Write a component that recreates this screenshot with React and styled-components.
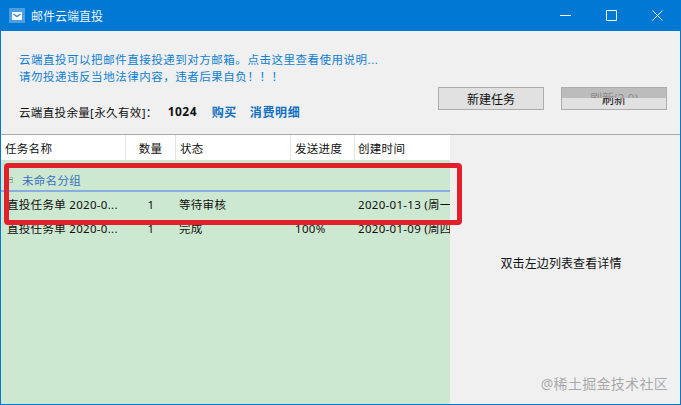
import styled, { createGlobalStyle } from "styled-components"

const Global = createGlobalStyle`
html, body { margin: 0; padding: 0; background: #f0f0f0; overflow: hidden; }
* { box-sizing: border-box; }
`

const fonts = `"Noto Sans", "Noto Sans CJK SC", sans-serif`

const Window = styled.div`
position: relative;
width: 681px;
height: 405px;
display: flex;
flex-direction: column;
background: #f0f0f0;
border: 1px solid #0078d4;
border-top: none;
font-family: ${fonts};
font-size: 12px;
color: #111;
overflow: hidden;
`

const TitleBar = styled.div`
height: 31px;
flex: none;
margin: 0 -1px;
background: #0078d4;
display: flex;
align-items: center;
padding-left: 9px;
color: #eaf4fc;
`

const AppIcon = styled.div`
width: 16px;
height: 15px;
background: #4a9fe4;
display: flex;
align-items: center;
justify-content: center;
margin-right: 6px;
`

const Title = styled.div`
font-size: 12px;
flex: 1;
`

const WinButton = styled.div`
width: 46px;
height: 31px;
display: flex;
align-items: center;
justify-content: center;
margin-right: ${(p) => p.$mr || 0}px;
`

const Top = styled.div`
height: 104px;
flex: none;
display: flex;
justify-content: space-between;
padding: 20px 13px 0 18px;
border-bottom: 1px solid #a9a9a9;
`

const Notes = styled.div`
display: flex;
flex-direction: column;
`

const Note = styled.div`
color: #0f7fd0;
font-size: 11.5px;
line-height: 17px;
letter-spacing: 0.52px;
white-space: nowrap;
`

const Quota = styled.div`
display: flex;
align-items: center;
margin-top: 18px;
height: 17px;
font-size: 11.5px;
letter-spacing: 0.35px;
white-space: nowrap;
`

const Amount = styled.b`
margin-left: 10px;
width: 44px;
font-size: 12px;
letter-spacing: 0.5px;
`

const BlueLink = styled.b`
color: #0f6fc0;
font-size: 12px;
letter-spacing: 0.6px;
margin-right: 13px;
`

const Buttons = styled.div`
display: flex;
gap: 17px;
padding-top: 36px;
`

const Button = styled.div`
position: relative;
width: 106px;
height: 23px;
background: #e1e1e1;
border: 1px solid #adadad;
display: flex;
align-items: center;
justify-content: center;
overflow: hidden;
font-size: 12px;
`

const ButtonCover = styled.div`
position: absolute;
left: 0;
right: 0;
top: 0;
height: 10px;
background: #bcbcbc;
color: #8c8c8c;
font-size: 12px;
line-height: 22px;
text-align: center;
overflow: hidden;
`

const Main = styled.div`
flex: 1;
display: flex;
min-height: 0;
`

const TablePane = styled.div`
width: 449px;
flex: none;
display: flex;
flex-direction: column;
background: #cde8d0;
`

const Row = styled.div`
display: grid;
grid-template-columns: 125px 50px 115px 64px 95px;
align-items: center;
height: ${(p) => p.$h}px;
white-space: nowrap;
overflow: hidden;
`

const HeaderRow = styled(Row)`
background: #fff;
`

const HeadCell = styled.div`
height: 100%;
display: flex;
align-items: center;
justify-content: ${(p) => (p.$center ? "center" : "flex-start")};
padding-left: ${(p) => (p.$center ? 0 : p.$pl ?? 4)}px;
border-right: 1px solid #e5e5e5;
font-size: 11.5px;
letter-spacing: 0.3px;
&:last-child { border-right: none; }
`

const Group = styled.div`
height: 26px;
margin-top: 6px;
padding: 3px 0 0 6px;
display: flex;
align-items: center;
color: #3a6fc0;
font-size: 11.5px;
letter-spacing: 0.3px;
border-bottom: 2px solid #86aee0;
`

const Expander = styled.span`
position: relative;
width: 6px;
height: 6px;
border: 1px solid #a3b3a8;
margin-right: 9px;
&::after {
  content: "";
  position: absolute;
  left: 0;
  right: 0;
  top: 1px;
  height: 1px;
  background: #6f7f75;
}
`

const Cell = styled.div`
display: flex;
justify-content: ${(p) => (p.$center ? "center" : "flex-start")};
padding-left: ${(p) => (p.$center ? 0 : p.$pl ?? 4)}px;
font-size: 11.5px;
letter-spacing: 0.3px;
overflow: hidden;
`

const Detail = styled.div`
flex: 1;
display: flex;
align-items: center;
justify-content: center;
padding: 0 8px 13px 0;
font-size: 12px;
letter-spacing: 0.1px;
`

const Highlight = styled.div`
position: absolute;
left: 3px;
top: 163px;
width: 458px;
height: 62px;
border: 5px solid #e2202c;
border-radius: 4px;
pointer-events: none;
`

const Watermark = styled.div`
position: absolute;
right: 12px;
bottom: 11px;
color: rgba(120, 120, 120, 0.6);
font-size: 14px;
letter-spacing: 0.3px;
`

const rows = [
  { name: "直投任务单 2020-0...", count: "1", status: "等待审核", progress: "", time: "2020-01-13 (周一" },
  { name: "直投任务单 2020-0...", count: "1", status: "完成", progress: "100%", time: "2020-01-09 (周四" },
]

const App = () => {
  return (
    <Window>
      <Global />
      <TitleBar>
        <AppIcon>
          <svg width="12" height="10" viewBox="0 0 12 10" fill="none">
            <path d="M1 1h10v8H1z" fill="#fff" />
            <path d="M2.5 3 6 5.6 9.5 3" stroke="#3d8fd8" strokeWidth="1.4" />
          </svg>
        </AppIcon>
        <Title>邮件云端直投</Title>
        <WinButton>
          <svg width="11" height="11" viewBox="0 0 11 11"><path d="M0 5.5h11" stroke="#fff" /></svg>
        </WinButton>
        <WinButton>
          <svg width="11" height="11" viewBox="0 0 11 11"><path d="M.5.5h10v10H.5z" stroke="#fff" fill="none" /></svg>
        </WinButton>
        <WinButton $mr={1}>
          <svg width="11" height="11" viewBox="0 0 11 11"><path d="M.5.5l10 10M10.5.5l-10 10" stroke="#fff" fill="none" /></svg>
        </WinButton>
      </TitleBar>
      <Top>
        <Notes>
          <Note>云端直投可以把邮件直接投递到对方邮箱。点击这里查看使用说明...</Note>
          <Note>请勿投递违反当地法律内容，违者后果自负！！！</Note>
          <Quota>
            云端直投余量[永久有效]：
            <Amount>1024</Amount>
            <BlueLink>购买</BlueLink>
            <BlueLink>消费明细</BlueLink>
          </Quota>
        </Notes>
        <Buttons>
          <Button>新建任务</Button>
          <Button>
            刷新
            <ButtonCover>刷新(2.0)</ButtonCover>
          </Button>
        </Buttons>
      </Top>
      <Main>
        <TablePane>
          <HeaderRow $h={25}>
            <HeadCell>任务名称</HeadCell>
            <HeadCell $center>数量</HeadCell>
            <HeadCell>状态</HeadCell>
            <HeadCell>发送进度</HeadCell>
            <HeadCell $pl={3}>创建时间</HeadCell>
          </HeaderRow>
          <Group>
            <Expander />
            未命名分组
          </Group>
          {rows.map((r, i) => (
            <Row key={i} $h={24}>
              <Cell $pl={6}>{r.name}</Cell>
              <Cell $center>{r.count}</Cell>
              <Cell $pl={3}>{r.status}</Cell>
              <Cell>{r.progress}</Cell>
              <Cell $pl={3}>{r.time}</Cell>
            </Row>
          ))}
        </TablePane>
        <Detail>双击左边列表查看详情</Detail>
      </Main>
      <Highlight />
      <Watermark>@稀土掘金技术社区</Watermark>
    </Window>
  )
}

export default App
